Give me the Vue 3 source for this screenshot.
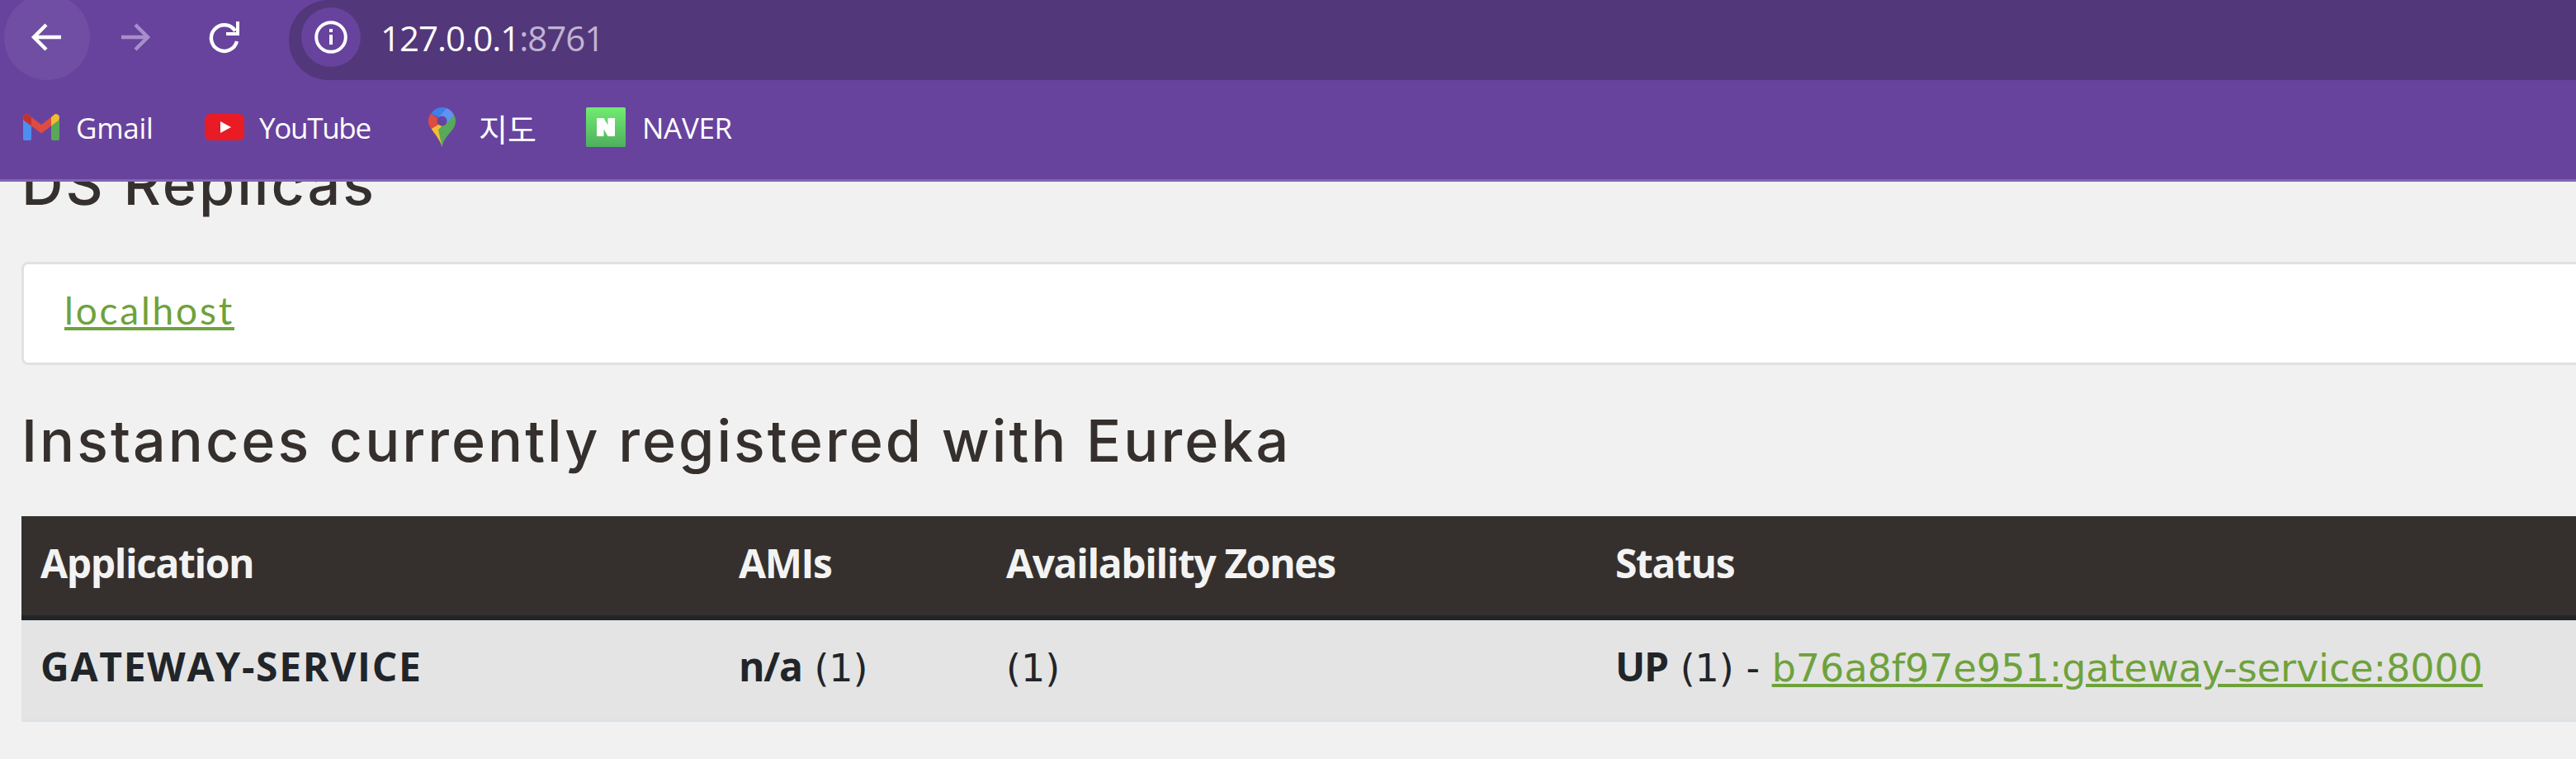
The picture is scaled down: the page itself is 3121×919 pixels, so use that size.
<script setup>
const bookmarks = [
  { id: "gmail", label: "Gmail" },
  { id: "youtube", label: "YouTube" },
  { id: "maps", label: "지도" },
  { id: "naver", label: "NAVER" },
];
const columns = ["Application", "AMIs", "Availability Zones", "Status"];
</script>

<template>
  <div class="screen">
    <header class="toolbar">
      <button class="nav-btn hover">
        <svg viewBox="0 0 40 40" width="40" height="40"><path d="M37 20H4M19 5 4 20l15 15" fill="none" stroke="#fff" stroke-width="4.4" /></svg>
      </button>
      <button class="nav-btn">
        <svg viewBox="0 0 40 40" width="40" height="40"><path d="M2 20h33M19 5l15 15-15 15" fill="none" stroke="#a68fc9" stroke-width="4.4" /></svg>
      </button>
      <button class="nav-btn">
        <svg viewBox="0 0 40 40" width="40" height="40"><path d="M34 25a15.800 15.800 0 1 1-2-12.500" fill="none" stroke="#fff" stroke-width="4.4" /><path d="M37 1v17H21v-4h12V1z" fill="#fff" /></svg>
      </button>
      <div class="omnibox">
        <span class="site-info">
          <svg viewBox="0 0 40 40" width="40" height="40"><circle cx="20" cy="20" r="17.800" fill="none" stroke="#fff" stroke-width="4" /><path d="M18 17h4v12h-4zM18 10h4v4h-4z" fill="#fff" /></svg>
        </span>
        <span class="url">127.0.0.1<span class="port">:8761</span></span>
      </div>
    </header>

    <nav class="bookmarks">
      <a v-for="b in bookmarks" :key="b.id" class="bookmark" :class="b.id">
        <svg v-if="b.id === 'gmail'" viewBox="0 0 44 32" width="44" height="32">
          <path d="M0 4a4 4 0 0 1 7-2.500L10 4v26a2 2 0 0 1-2 2H2a2 2 0 0 1-2-2z" fill="#4d8ff0" />
          <path d="M34 4l3-2.500A4 4 0 0 1 44 4v26a2 2 0 0 1-2 2h-6a2 2 0 0 1-2-2z" fill="#57a957" />
          <path d="M0 4a4 4 0 0 1 7-2.500L22 13l15-11.500A4 4 0 0 1 44 4c0 2-1 3.500-2 4.500L34 14.500 22 23.500 10 14.500 2 8.500C1 7.500 0 6 0 4z" fill="#dd4b42" />
          <path d="M0 4a4 4 0 0 1 7-2.500L10 4v10.500L2 8.500C1 7.500 0 6 0 4z" fill="#c5302b" />
          <path d="M34 4l3-2.500A4 4 0 0 1 44 4c0 2-1 3.500-2 4.500l-8 6z" fill="#f0bb33" />
        </svg>
        <svg v-else-if="b.id === 'youtube'" viewBox="0 0 48 32" width="48" height="32">
          <rect width="48" height="32" rx="7" fill="#e91c25" />
          <path d="M19 9l13 7-13 7z" fill="#fff" />
        </svg>
        <svg v-else-if="b.id === 'maps'" viewBox="0 0 33 48" width="33" height="48">
          <path d="M16.500 48C14 39 9 34 3.500 26L16 16z" fill="#f2bd35" />
          <path d="M16.500 48C18.500 38 24 34 29.500 26.500 32 23 33 20 33 16.500c0-3-.8-5.500-2-7.500L12 27z" fill="#58a959" />
          <path d="M3.500 26C1 22.500 0 20 0 16.500 0 13 1.200 10 3.200 7.500L16 16 12 21z" fill="#dc4c40" />
          <path d="M3.200 7.500C6.200 3 11 0 16.500 0c2 0 4 .4 5.500 1L12 12z" fill="#3f7fe8" />
          <path d="M22 1c4 1.500 7 4.300 9 8L22 20 12 12z" fill="#5d93f2" />
          <circle cx="16.500" cy="16.500" r="6" fill="#67439e" />
        </svg>
        <svg v-else viewBox="0 0 48 48" width="48" height="48">
          <defs>
            <linearGradient id="naver-bg" x1="0" y1="0" x2="0" y2="1">
              <stop offset="0" stop-color="#71ec71" />
              <stop offset="1" stop-color="#4fae5e" />
            </linearGradient>
          </defs>
          <rect width="48" height="48" rx="1.500" fill="url(#naver-bg)" />
          <path d="M13 13h8.500l5 8.500V13H35v22h-8.500l-5-8.500V35H13z" fill="#fff" />
        </svg>
        <span class="bookmark-label">{{ b.label }}</span>
      </a>
    </nav>

    <main class="page">
      <h2 class="replicas-title">DS Replicas</h2>
      <div class="well"><a class="link">localhost</a></div>
      <h2 class="instances-title">Instances currently registered with Eureka</h2>
      <table class="instances">
        <colgroup>
          <col class="col-app" />
          <col class="col-ami" />
          <col class="col-zone" />
          <col />
        </colgroup>
        <thead>
          <tr>
            <th v-for="c in columns" :key="c">{{ c }}</th>
          </tr>
        </thead>
        <tbody>
          <tr>
            <td><b class="app-name">GATEWAY-SERVICE</b></td>
            <td><b>n/a</b> (1)</td>
            <td>(1)</td>
            <td><b>UP</b> (1) - <a class="link">b76a8f97e951:gateway-service:8000</a></td>
          </tr>
        </tbody>
      </table>
    </main>
  </div>
</template>

<style>
html,
body {
  margin: 0;
  background: #f1f1f1;
  overflow: hidden;
}
</style>

<style scoped>
.screen {
  width: 3121px;
  height: 919px;
  overflow: hidden;
  display: flex;
  flex-direction: column;
  background: #f1f1f1;
}

.toolbar {
  height: 97px;
  flex: none;
  display: flex;
  background: #67439e;
  padding-left: 5px;
  box-sizing: border-box;
  overflow: hidden;
}
.nav-btn {
  width: 104px;
  height: 104px;
  margin-top: -7px;
  flex: none;
  border: 0;
  padding: 0;
  margin-right: 4px;
  background: transparent;
  border-radius: 50%;
  display: flex;
  align-items: center;
  justify-content: center;
}
.nav-btn.hover {
  background: #6f4ea3;
}
.omnibox {
  flex: 1;
  margin-left: 21px;
  height: 97px;
  background: #52377a;
  border-radius: 48px 0 0 48px;
  display: flex;
  align-items: center;
  padding-left: 15px;
}
.site-info {
  width: 72px;
  height: 72px;
  border-radius: 50%;
  background: #67439e;
  display: flex;
  align-items: center;
  justify-content: center;
  margin-top: -7px;
}
.url {
  margin-left: 24px;
  margin-top: -7px;
  font: 42px "Open Sans", sans-serif;
  letter-spacing: -1px;
  color: #fff;
}
.port {
  color: #c0b4d2;
}

.bookmarks {
  height: 123px;
  flex: none;
  box-sizing: border-box;
  display: flex;
  align-items: center;
  padding: 0 0 6px 28px;
  background: #67439e;
  border-bottom: 3px solid #8266b3;
}
.bookmark {
  display: flex;
  align-items: center;
  color: #fff;
  font: 35px "Open Sans", "Noto Sans CJK KR", sans-serif;
  letter-spacing: -0.6px;
}
.bookmark svg {
  flex: none;
}
.bookmark-label {
  margin-left: 20px;
  padding-top: 1px;
}
.gmail {
  width: 220px;
  letter-spacing: -0.3px;
}
.youtube {
  width: 271px;
  letter-spacing: -1.3px;
}
.youtube .bookmark-label {
  margin-left: 18px;
}
.maps {
  width: 191px;
  font-size: 38px;
  letter-spacing: 0;
}
.maps .bookmark-label {
  margin-left: 28px;
}
.naver {
  letter-spacing: -0.3px;
}

.page {
  flex: 1;
  min-height: 0;
  overflow: hidden;
  padding-left: 26px;
  color: #35302d;
}
h2 {
  margin: 0;
  font-family: "Inter", sans-serif;
  font-size: 70px;
  font-weight: 500;
  letter-spacing: 3px;
  line-height: 86px;
  color: #35302d;
}
.replicas-title {
  margin-top: -40px;
}
.well {
  margin-top: 51px;
  height: 125px;
  box-sizing: border-box;
  background: #fff;
  border: 3px solid #e1e1e1;
  border-right: 0;
  border-radius: 8px 0 0 8px;
  padding: 0 0 8px 49px;
  display: flex;
  align-items: center;
  font-family: "Lato", sans-serif;
  font-size: 46px;
  letter-spacing: 2.8px;
}
.link {
  color: #6ea23c;
  text-decoration: underline;
}
.instances-title {
  margin-top: 49px;
}
.instances {
  margin-top: 48px;
  width: 3095px;
  table-layout: fixed;
  border-collapse: separate;
  border-spacing: 0;
  font-family: "DejaVu Sans", sans-serif;
  font-size: 46px;
  color: #212529;
}
.col-app {
  width: 846px;
}
.col-ami {
  width: 324px;
}
.col-zone {
  width: 738px;
}
th {
  height: 126px;
  box-sizing: border-box;
  padding: 0 23px 8px;
  text-align: left;
  font-family: "Open Sans", sans-serif;
  font-size: 48px;
  font-weight: 700;
  letter-spacing: -1.4px;
  color: #f3f3f3;
  background: #35302d;
  border-bottom: 6px solid #212529;
}
td {
  height: 123px;
  box-sizing: border-box;
  padding: 26px 23px 0;
  line-height: 60px;
  vertical-align: baseline;
  background: #e4e4e4;
  border-bottom: 3px solid #dee2e6;
  white-space: nowrap;
}
td b {
  font-family: "Open Sans", sans-serif;
  font-size: 48px;
  font-weight: 700;
  letter-spacing: -1.2px;
}
td b.app-name {
  letter-spacing: 1.7px;
}
</style>
